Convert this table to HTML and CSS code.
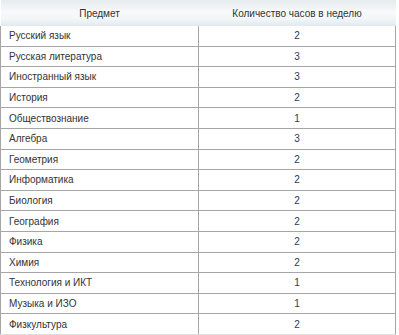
FILE: index.html
```html
<!DOCTYPE html>
<html lang="ru">
<head>
<meta charset="utf-8">
<link rel="stylesheet" href="styles.css">
</head>
<body>
<table class="hours">
  <thead>
    <tr><th class="subj">Предмет</th><th class="num">Количество часов в неделю</th></tr>
  </thead>
  <tbody>
    <tr><td>Русский язык</td><td class="c">2</td></tr>
    <tr><td>Русская литература</td><td class="c">3</td></tr>
    <tr><td>Иностранный язык</td><td class="c">3</td></tr>
    <tr><td>История</td><td class="c">2</td></tr>
    <tr><td>Обществознание</td><td class="c">1</td></tr>
    <tr><td>Алгебра</td><td class="c">3</td></tr>
    <tr><td>Геометрия</td><td class="c">2</td></tr>
    <tr><td>Информатика</td><td class="c">2</td></tr>
    <tr><td>Биология</td><td class="c">2</td></tr>
    <tr><td>География</td><td class="c">2</td></tr>
    <tr><td>Физика</td><td class="c">2</td></tr>
    <tr><td>Химия</td><td class="c">2</td></tr>
    <tr><td>Технология и ИКТ</td><td class="c">1</td></tr>
    <tr><td>Музыка и ИЗО</td><td class="c">1</td></tr>
    <tr><td>Физкультура</td><td class="c">2</td></tr>
  </tbody>
</table>
</body>
</html>
```
FILE: styles.css
```css
html, body {
  margin: 0;
  padding: 0;
  background: #ffffff;
}
.hours {
  border-collapse: collapse;
  width: 396px;
  font-family: "Liberation Sans", Arial, sans-serif;
  font-size: 10px;
  line-height: 12px;
  color: #333333;
  table-layout: fixed;
  border-bottom: 1px solid #dedede;
}
.hours th {
  height: 25px;
  padding: 1px 0 0;
  font-weight: normal;
  text-align: center;
  background: linear-gradient(to bottom, #e6ebef 0%, #f7f9fa 45%, #f4f7f9 70%, #e2e9ee 100%);
  border: none;
}
.hours th.subj { width: 198px; }
.hours td {
  height: 18.6px;
  padding: 1px 0 0 8px;
  border: 1px solid #a6a6a6;
  border-top: none;
  border-bottom: 1px solid #a6a6a6;
}
.hours tr:last-child td {
  border-bottom: 1px solid #dedede;
}
.hours td.c {
  text-align: center;
  padding: 1px 0 0;
  color: #2b3a55;
}
```
